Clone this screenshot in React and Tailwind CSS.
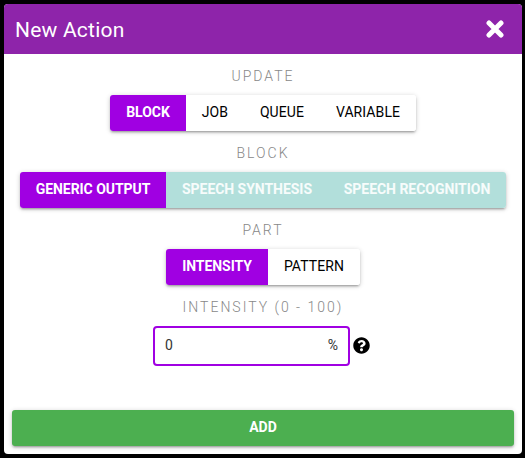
import React from "react";

const shadow =
  "shadow-[0_1px_5px_rgba(0,0,0,0.2),0_2px_2px_rgba(0,0,0,0.14),0_3px_1px_-2px_rgba(0,0,0,0.12)]";

function Label({ children }) {
  return (
    <div className="flex h-[41px] items-center justify-center pt-[3px] text-sm font-light tracking-[2px] text-[#888]">
      {children}
    </div>
  );
}

function Segments({ items }) {
  return (
    <div className={`mx-auto flex h-9 w-fit overflow-hidden rounded-[3px] ${shadow}`}>
      {items.map(({ text, width, tone }) => (
        <button
          key={text}
          className={`flex shrink-0 items-center justify-center whitespace-nowrap pb-0.5 text-sm ${width} ${tone}`}
        >
          {text}
        </button>
      ))}
    </div>
  );
}

const active = "bg-[#a000e2] font-bold tracking-[-0.06px] text-white";
const plain = "bg-white font-normal tracking-[0.1px] text-black";
const disabled = "bg-[#b2dfdb] font-bold tracking-[-0.04px] text-white/90";

export default function App() {
  return (
    <div className="h-[458px] w-[525px] bg-black pt-1 pl-1 font-['Roboto',sans-serif]">
      <div className="flex h-[450px] w-[518px] flex-col overflow-hidden rounded-[4px] bg-white">
        <header className="flex h-[50px] shrink-0 items-center justify-between bg-[#8e24aa] pr-[18px] pl-[11px] text-white">
          <h1 className="pt-[3px] text-[21px] font-normal tracking-[0.01em]">New Action</h1>
          <svg viewBox="0 0 18 18" className="h-[18px] w-[18px]" aria-label="Close">
            <path d="M3 3L15 15M15 3L3 15" stroke="currentColor" strokeWidth="5" strokeLinecap="round" />
          </svg>
        </header>
        <main className="flex flex-1 flex-col">
          <Label>UPDATE</Label>
          <Segments
            items={[
              { text: "BLOCK", width: "w-[76px]", tone: active },
              { text: "JOB", width: "w-[58px]", tone: plain },
              { text: "QUEUE", width: "w-[76px]", tone: plain },
              { text: "VARIABLE", width: "w-[96px]", tone: plain },
            ]}
          />
          <Label>BLOCK</Label>
          <Segments
            items={[
              { text: "GENERIC OUTPUT", width: "w-[146px]", tone: active },
              { text: "SPEECH SYNTHESIS", width: "w-[162px]", tone: disabled },
              { text: "SPEECH RECOGNITION", width: "w-[178px]", tone: disabled },
            ]}
          />
          <Label>PART</Label>
          <Segments
            items={[
              { text: "INTENSITY", width: "w-[102px]", tone: active },
              { text: "PATTERN", width: "w-[92px]", tone: plain },
            ]}
          />
          <Label>INTENSITY (0 - 100)</Label>
          <div className="ml-[149px] flex items-center gap-[3px]">
            <div className="flex h-10 w-[197px] items-center justify-between rounded-[4px] border-2 border-[#a000e2] px-2.5 pb-0.5 text-sm text-[#333]">
              <span>0</span>
              <span>%</span>
            </div>
            <svg viewBox="0 0 512 512" className="mb-px h-[17px] w-[17px]" aria-label="Help">
              <path d="M504 256c0 136.997-111.043 248-248 248S8 392.997 8 256C8 119.083 119.043 8 256 8s248 111.083 248 248zM262.655 90c-54.497 0-89.255 22.957-116.549 63.758-3.536 5.286-2.353 12.415 2.715 16.258l34.699 26.31c5.205 3.947 12.621 3.008 16.665-2.122 17.864-22.658 30.113-35.797 57.303-35.797 20.429 0 45.698 13.148 45.698 32.958 0 14.976-12.363 22.667-32.534 33.976C247.128 238.528 216 254.941 216 296v4c0 6.627 5.373 12 12 12h56c6.627 0 12-5.373 12-12v-1.333c0-28.462 83.186-29.647 83.186-106.667 0-58.002-60.165-102-116.531-102zM256 338c-25.365 0-46 20.635-46 46 0 25.364 20.635 46 46 46s46-20.636 46-46c0-25.365-20.635-46-46-46z" />
            </svg>
          </div>
        </main>
        <div className="p-2">
          <button className={`flex h-9 w-full items-center justify-center rounded-[3px] bg-[#4caf50] pb-0.5 text-sm font-bold text-white ${shadow}`}>
            ADD
          </button>
        </div>
      </div>
    </div>
  );
}
